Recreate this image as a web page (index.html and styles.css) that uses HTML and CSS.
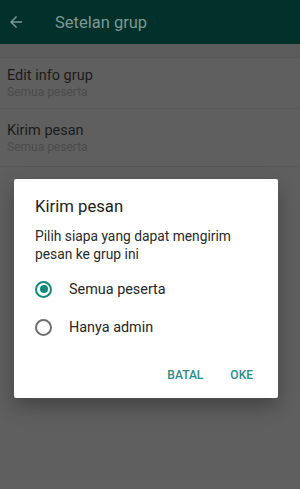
FILE: index.html
```html
<!DOCTYPE html>
<html lang="id">
<head>
  <meta charset="UTF-8" />
  <meta name="viewport" content="width=device-width, initial-scale=1.0"/>
  <title>Setelan grup</title>
  <link rel="stylesheet" href="styles.css">
</head>
<body>

  <div class="topbar">
    <svg class="back" width="24" height="24" viewBox="0 0 24 24">
      <path d="M20 11H7.83l5.59-5.59L12 4l-8 8 8 8 1.41-1.41L7.83 13H20v-2z" fill="currentColor"/>
    </svg>
    <span class="topbar-title">Setelan grup</span>
  </div>

  <div class="settings">
    <div class="gap"></div>
    <div class="row">
      <div class="row-title">Edit info grup</div>
      <div class="row-sub">Semua peserta</div>
    </div>
    <div class="row">
      <div class="row-title">Kirim pesan</div>
      <div class="row-sub">Semua peserta</div>
    </div>
  </div>

  <div class="dialog">
    <h2>Kirim pesan</h2>
    <p>Pilih siapa yang dapat mengirim pesan ke grup ini</p>
    <div class="option">
      <span class="radio checked"></span>
      <span>Semua peserta</span>
    </div>
    <div class="option">
      <span class="radio"></span>
      <span>Hanya admin</span>
    </div>
    <div class="actions">
      <span>BATAL</span>
      <span>OKE</span>
    </div>
  </div>

</body>
</html>
```

FILE: styles.css
```css
body {
  margin: 0;
  width: 300px;
  height: 489px;
  overflow: hidden;
  background: #5f5f5f;
  font-family: Roboto, 'Noto Sans', sans-serif;
}

.topbar {
  height: 44px;
  background: #02302b;
  color: #7d9894;
  display: flex;
  align-items: center;
}

.back {
  width: 18px;
  height: 18px;
  margin-left: 7px;
}

.topbar-title {
  margin-left: 30px;
  font-size: 16.5px;
}

.settings .gap {
  height: 13px;
  background: #5c5c5c;
  border-bottom: 1px solid #585858;
}

.row {
  padding: 9px 7px 0;
  height: 41px;
  border-bottom: 1px solid #585858;
}

.row + .row {
  padding-top: 13px;
  height: 44px;
}

.row-title {
  font-size: 14.5px;
  line-height: 18px;
  color: #1c1c1c;
}

.row-sub {
  font-size: 12px;
  line-height: 15px;
  color: #4b4b4b;
}

.dialog {
  position: absolute;
  left: 14px;
  top: 179px;
  width: 264px;
  height: 219px;
  box-sizing: border-box;
  padding: 16px 21px 0;
  background: #fff;
  border-radius: 2px;
  box-shadow: 0 8px 20px rgba(0, 0, 0, 0.3);
}

.dialog h2 {
  margin: 0;
  font-size: 16.7px;
  font-weight: normal;
  line-height: 24px;
  color: #212121;
}

.dialog p {
  margin: 8px 0 7px;
  font-size: 13.8px;
  line-height: 18px;
  color: #2a2a2a;
}

.option {
  display: flex;
  align-items: center;
  height: 38px;
  font-size: 14.4px;
  color: #262626;
}

.radio {
  width: 13px;
  height: 13px;
  border: 2px solid #6e6e6e;
  border-radius: 50%;
  margin-right: 17px;
  position: relative;
}

.radio.checked {
  border-color: #0f897b;
}

.radio.checked::after {
  content: "";
  position: absolute;
  left: 2.5px;
  top: 2.5px;
  width: 8px;
  height: 8px;
  border-radius: 50%;
  background: #0f897b;
}

.actions {
  display: flex;
  justify-content: flex-end;
  gap: 27px;
  margin-top: 22px;
  margin-right: 4px;
  font-size: 12px;
  font-weight: 500;
  color: #2a8d84;
}
```
